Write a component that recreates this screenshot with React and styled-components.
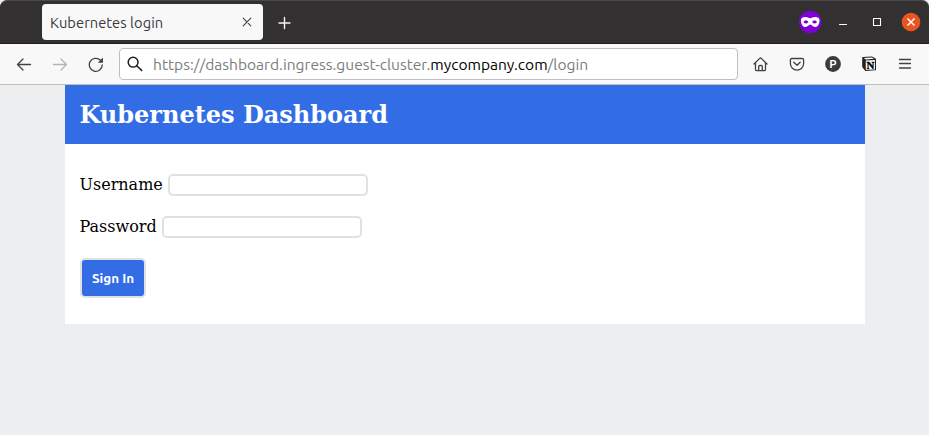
import React from "react";
import styled, { createGlobalStyle } from "styled-components";

const GlobalStyle = createGlobalStyle`
  * { box-sizing: border-box; }
  body { margin: 0; background: #edeef0; }
`;

const uiFont = `Ubuntu, "Noto Sans", sans-serif`;

const Browser = styled.div`
  height: 435px;
  overflow: hidden;
  display: flex;
  flex-direction: column;
  background: #edeef0;
`;

const TitleBar = styled.header`
  height: 44px;
  flex: none;
  display: flex;
  align-items: flex-start;
  padding: 4px 8px 0 42px;
  background: #323031;
  border-top: 1px solid #4a4849;
  border-bottom: 1px solid #1f1d1e;
  border-radius: 7px 7px 0 0;
`;

const Tab = styled.div`
  width: 221px;
  height: 36px;
  margin-top: -1px;
  padding: 0 10px 0 8px;
  display: flex;
  align-items: center;
  justify-content: space-between;
  border-radius: 4px;
  background: #f8f8f8;
  color: #38383d;
`;

const TabTitle = styled.span`
  padding-top: 2px;
  font: 14.67px/20px ${uiFont};
  letter-spacing: 0.06px;
  white-space: nowrap;
`;

const IconButton = styled.button`
  width: ${(p) => p.$w || 24}px;
  height: ${(p) => p.$h || 24}px;
  flex: none;
  display: flex;
  align-items: center;
  justify-content: center;
  padding: 0;
  border: 0;
  background: none;
  color: ${(p) => p.$color || "#424143"};

  svg { display: block; flex: none; }
`;

const NewTab = styled(IconButton)`
  margin: 6px 0 0 10px;
`;

const WindowControls = styled.div`
  display: flex;
  align-items: center;
  gap: 10px;
  height: 34px;
  margin-left: auto;
`;

const NavBar = styled.nav`
  height: 41px;
  flex: none;
  display: flex;
  align-items: center;
  padding: 0 12px;
  background: #f8f8f8;
  border-bottom: 1px solid #bfbfbf;
`;

const NavGroup = styled.div`
  display: flex;
  gap: 12px;
  width: 107px;
`;

const AddressBar = styled.div`
  width: 619px;
  height: 32px;
  display: flex;
  align-items: center;
  padding-left: 7px;
  border: 1px solid #bfbfbf;
  border-radius: 4px;
  background: #fff;
  color: #202023;

  svg { flex: none; }
`;

const Url = styled.span`
  margin-left: 10px;
  font: 15.57px/20px ${uiFont};
  white-space: nowrap;
  color: #7c7c7c;
`;

const Host = styled.span`
  color: #000;
`;

const Tools = styled.div`
  display: flex;
  gap: 12px;
  margin-left: auto;
`;

const Card = styled.main`
  width: 800px;
  height: 239px;
  margin-left: 65px;
  background: #fff;
  font-family: "DejaVu Serif", serif;
`;

const Heading = styled.h1`
  height: 59px;
  margin: 0;
  padding: 0 14.5px;
  background: #326de6;
  color: #fff;
  font-size: 24px;
  font-weight: 700;
  line-height: 59px;
`;

const Form = styled.form`
  display: flex;
  flex-direction: column;
  align-items: flex-start;
  gap: 20px;
  padding: 30px 14.5px 0;
`;

const Field = styled.label`
  display: flex;
  align-items: center;
  gap: 5.4px;
  height: 22px;
  font-size: 16px;
  line-height: 22px;
  color: #000;
`;

const Input = styled.input`
  width: 200px;
  height: 22px;
  padding: 1px 4px;
  border: 2px solid #e1e1e1;
  border-radius: 5px;
  background: #fff;
`;

const SignIn = styled.button`
  width: 66px;
  height: 40px;
  margin-left: 0.5px;
  padding: 2px 0 0;
  border: 2px solid #e1e1e1;
  border-radius: 5px;
  background: #326de6;
  color: #fff;
  font: 700 13.4px/18px ${uiFont};
  white-space: nowrap;
`;

const Line = ({ d, size = 16, width = 1.2 }) => (
  <svg width={size} height={size} viewBox={`0 0 ${size} ${size}`} fill="none" stroke="currentColor" strokeWidth={width} strokeLinecap="round" strokeLinejoin="round">
    <path d={d} />
  </svg>
);

const MaskIcon = () => (
  <svg width="24" height="24" viewBox="0 0 24 24">
    <circle cx="11.2" cy="12" r="11.2" fill="#8000d7" />
    <path fill="#fff" d="M2 10.200C2 8.200 3.800 7 6.300 7c2.500 0 3.200 1.200 4.900 1.200S13.700 7 16.200 7C18.700 7 20.500 8.200 20.500 10.200 20.500 14 18.800 17 16 17c-2.500 0-3.100-2.500-4.700-2.500S9 17 6.500 17C3.700 17 2 14 2 10.200Z" />
    <path fill="#8000d7" d="M4.400 12q2.500-3.400 5.100 0-2.600 3-5.100 0ZM13 12q2.600-3.400 5.100 0-2.500 3-5.100 0Z" />
  </svg>
);

const CloseWindowIcon = () => (
  <svg width="20" height="20" viewBox="0 0 20 20" fill="none">
    <circle cx="10" cy="10" r="9.300" fill="#e95420" />
    <path d="m6.500 6.500 7 7m0-7-7 7" stroke="#fff" strokeWidth="1.500" />
  </svg>
);

const ReloadIcon = () => (
  <svg width="16" height="16" viewBox="0 0 16 16" fill="none">
    <path d="M14.300 8.800A6.500 6.500 0 1 1 12.500 4.300" stroke="currentColor" strokeWidth="1.300" strokeLinecap="round" />
    <path d="M15 1.500v5.200H9.800Z" fill="currentColor" />
  </svg>
);

const ProfileIcon = () => (
  <svg width="16" height="16" viewBox="0 0 16 16">
    <circle cx="8" cy="8" r="7.900" fill="#3b3b3d" />
    <text x="8.100" y="11.700" textAnchor="middle" fill="#fff" fontFamily="Liberation Sans, sans-serif" fontWeight="700" fontSize="10.500">P</text>
  </svg>
);

const NotionIcon = () => (
  <svg width="16" height="16" viewBox="0 0 16 16">
    <path d="M1.200 1.900q0-.7.800-.8L11 .6q.6 0 1 .3l2.500 1.700q.5.4.5 1v9.800q0 .8-.8.900l-9.300.7q-.6 0-1-.5l-2.300-2.900q-.4-.5-.4-1.100Z" fill="#222" />
    <path d="m2.800 2 8.200-.5 1.900 1.300-8 .6Z" fill="#fff" />
    <path d="m4.800 4.500 9.200-.6v9.500l-9.200.7Z" fill="#fff" />
    <text x="9.400" y="12.800" textAnchor="middle" fill="#000" fontFamily="Liberation Serif, serif" fontWeight="700" fontSize="11" stroke="#000" strokeWidth=".35">N</text>
  </svg>
);

export default function App() {
  return (
    <>
      <GlobalStyle />
      <Browser>
        <TitleBar>
          <Tab>
            <TabTitle>Kubernetes login</TabTitle>
            <IconButton $w={12} $h={12}><Line size={10} width={1.1} d="m1.200 1.200 7.600 7.600m0-7.600-7.600 7.600" /></IconButton>
          </Tab>
          <NewTab $color="#f5f5f5"><Line width={1.400} d="M7.500 2.500v11M2 8h11" /></NewTab>
          <WindowControls>
            <IconButton><MaskIcon /></IconButton>
            <IconButton $color="#fff"><Line d="M2.500 10.500h7" /></IconButton>
            <IconButton $color="#fff"><Line width={1.1} d="M2.500 4.500h7v7h-7Z" /></IconButton>
            <IconButton $w={20}><CloseWindowIcon /></IconButton>
          </WindowControls>
        </TitleBar>
        <NavBar>
          <NavGroup>
            <IconButton><Line width={1.300} d="M1.500 8.500h13M7 3 1.500 8.500 7 14" /></IconButton>
            <IconButton $color="#b4b4b5"><Line width={1.300} d="M1.500 8.500h13M9 3l5.500 5.500L9 14" /></IconButton>
            <IconButton><ReloadIcon /></IconButton>
          </NavGroup>
          <AddressBar>
            <Line width={1.500} d="M11 6.200a4.900 4.900 0 1 1-9.800 0 4.900 4.900 0 0 1 9.800 0ZM9.700 9.700l5 4.700" />
            <Url>https://dashboard.ingress.guest-cluster.<Host>mycompany.com</Host>/login</Url>
          </AddressBar>
          <Tools>
            <IconButton><Line width={1.300} d="m1 8 5.700-5.600q.8-.7 1.600 0L14 8M2.500 6.500v7q0 1.200 1.200 1.200h7.600q1.200 0 1.200-1.200v-7M5.700 14.500v-4q0-1 1-1h1.600q1 0 1 1v4" /></IconButton>
            <IconButton><Line width={1.300} d="M2.800 2.500h10.400q1.400 0 1.400 1.400V7.500a6.600 6.600 0 0 1-13.200 0V3.900q0-1.400 1.400-1.400ZM4.800 6.300 8 9.300l3.200-3" /></IconButton>
            <IconButton><ProfileIcon /></IconButton>
            <IconButton><NotionIcon /></IconButton>
            <IconButton><Line width={1.300} d="M2.500 3.500h11M2.500 7.500h11M2.500 12h11" /></IconButton>
          </Tools>
        </NavBar>
        <Card>
          <Heading>Kubernetes Dashboard</Heading>
          <Form>
            <Field>Username<Input type="text" /></Field>
            <Field>Password<Input type="password" /></Field>
            <SignIn type="button">Sign In</SignIn>
          </Form>
        </Card>
      </Browser>
    </>
  );
}
